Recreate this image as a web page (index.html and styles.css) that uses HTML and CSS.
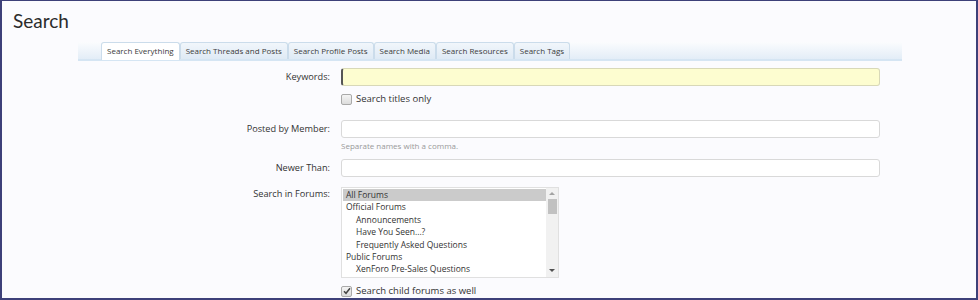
FILE: index.html
```html
<!DOCTYPE html>
<html lang="en">
<head>
    <meta charset="UTF-8">
    <title>Search</title>
    <link rel="stylesheet" href="styles.css">
</head>
<body>
    <div class="frame">
        <h1 class="page-title">Search</h1>

        <div class="search-area">
            <ul class="tabs">
                <li class="tab active">Search Everything</li>
                <li class="tab">Search Threads and Posts</li>
                <li class="tab">Search Profile Posts</li>
                <li class="tab">Search Media</li>
                <li class="tab">Search Resources</li>
                <li class="tab">Search Tags</li>
            </ul>

            <form class="search-form">
                <label class="ctrl-label">Keywords:</label>
                <div class="ctrl"><input class="text-input keywords" type="text"></div>

                <div></div>
                <div class="ctrl check-row first-check">
                    <span class="checkbox"></span>
                    <span>Search titles only</span>
                </div>

                <label class="ctrl-label row-gap">Posted by Member:</label>
                <div class="ctrl row-gap"><input class="text-input" type="text"></div>

                <div></div>
                <div class="ctrl hint">Separate names with a comma.</div>

                <label class="ctrl-label small-gap">Newer Than:</label>
                <div class="ctrl small-gap"><input class="text-input" type="text"></div>

                <label class="ctrl-label forums-label">Search in Forums:</label>
                <div class="ctrl forums-gap">
                    <div class="listbox">
                        <ul class="list-items">
                            <li class="selected">All Forums</li>
                            <li>Official Forums</li>
                            <li class="child">Announcements</li>
                            <li class="child">Have You Seen...?</li>
                            <li class="child">Frequently Asked Questions</li>
                            <li>Public Forums</li>
                            <li class="child">XenForo Pre-Sales Questions</li>
                        </ul>
                        <div class="scrollbar">
                            <span class="arrow up"></span>
                            <span class="thumb"></span>
                            <span class="arrow down"></span>
                        </div>
                    </div>
                </div>

                <div></div>
                <div class="ctrl check-row last-check">
                    <span class="checkbox checked">
                        <svg width="8" height="8" viewBox="0 0 8 8"><path d="M1 4.2 L3 6.3 L7 1.2" fill="none" stroke="#444" stroke-width="1.5"/></svg>
                    </span>
                    <span>Search child forums as well</span>
                </div>
            </form>
        </div>
    </div>
</body>
</html>
```

FILE: styles.css
```css
body { margin: 0; font-family: 'Open Sans', 'DejaVu Sans', sans-serif; color: #333; }

.frame {
    height: 300px;
    box-sizing: border-box;
    border: 2px solid #3d4079;
    border-top-width: 1px;
    background-color: #fbfbfe;
    overflow: hidden;
}

.page-title {
    margin: 0;
    padding: 8px 0 0 11px;
    font-family: 'Lato', 'Open Sans', sans-serif;
    font-size: 19px;
    font-weight: normal;
    color: #2b2b2b;
    line-height: 24px;
}

/* 検索エリア */
.search-area {
    width: 824px;
    margin: 9px 0 0 76px;
}

.tabs {
    display: flex;
    list-style: none;
    margin: 0;
    padding: 0 0 0 23px;
    height: 17px;
    background: linear-gradient(to bottom, #fbfcfe, #e3edf7);
    border-bottom: 2px solid #d5e5f3;
}

.tab {
    font-size: 8px;
    line-height: 16px;
    padding: 0 5px;
    color: #3b3b3b;
    background: linear-gradient(to bottom, #f1f6fb, #dfeaf5);
    border: 1px solid #cbdceb;
    border-bottom: none;
    border-radius: 3px 3px 0 0;
    white-space: nowrap;
}

.tab.active {
    background: #ffffff;
    height: 17px;
    margin-bottom: -2px;
}

/* フォーム */
.search-form {
    display: grid;
    grid-template-columns: 252px 539px;
    column-gap: 11px;
    align-items: start;
    padding-top: 7px;
    font-size: 9.2px;
}

.ctrl-label {
    text-align: right;
    line-height: 18px;
    color: #333;
}

.text-input {
    display: block;
    width: 100%;
    height: 18px;
    box-sizing: border-box;
    border: 1px solid #d9d9d9;
    border-radius: 3px;
    background: #ffffff;
    margin: 0;
    padding: 0 4px;
}

.text-input.keywords {
    background: #fdfdd0;
    border-color: #d8d8b8;
    border-left: 2px solid #555;
}

.check-row {
    display: flex;
    align-items: center;
    gap: 4px;
    font-size: 9.5px;
    line-height: 14px;
}

.first-check { margin-top: 6px; }
.last-check { margin-top: 6px; }

.checkbox {
    width: 9px;
    height: 9px;
    border: 1px solid #a9a9a9;
    border-radius: 2px;
    background: linear-gradient(to bottom, #f4f4f4, #dcdcdc);
    display: inline-flex;
    align-items: center;
    justify-content: center;
}

.row-gap { margin-top: 14px; }
.small-gap { margin-top: 8px; }

.hint {
    font-size: 8px;
    color: #999;
    line-height: 10px;
    margin-top: 3px;
}

.forums-label { margin-top: 10px; line-height: 14px; }
.forums-gap { margin-top: 10px; }

.listbox {
    width: 218px;
    height: 91px;
    box-sizing: border-box;
    border: 1px solid #e0e0e0;
    background: #ffffff;
    display: flex;
}

.list-items {
    list-style: none;
    margin: 0;
    padding: 1px 0 0 1px;
    flex: 1;
    font-size: 8.5px;
}

.list-items li {
    line-height: 12.4px;
    padding-left: 3px;
    color: #333;
}

.list-items li.child { padding-left: 13px; }
.list-items li.selected { background: #cbcbcb; }

.scrollbar {
    width: 12px;
    background: #f1f1f1;
    display: flex;
    flex-direction: column;
    align-items: center;
}

.arrow {
    width: 0;
    height: 0;
    border-left: 3px solid transparent;
    border-right: 3px solid transparent;
}

.arrow.up { border-bottom: 3px solid #a3a3a3; margin-top: 4px; }
.arrow.down { border-top: 3px solid #505050; margin-top: auto; margin-bottom: 5px; }

.thumb {
    width: 9px;
    height: 15px;
    background: #c1c1c1;
    margin-top: 4px;
}
```
